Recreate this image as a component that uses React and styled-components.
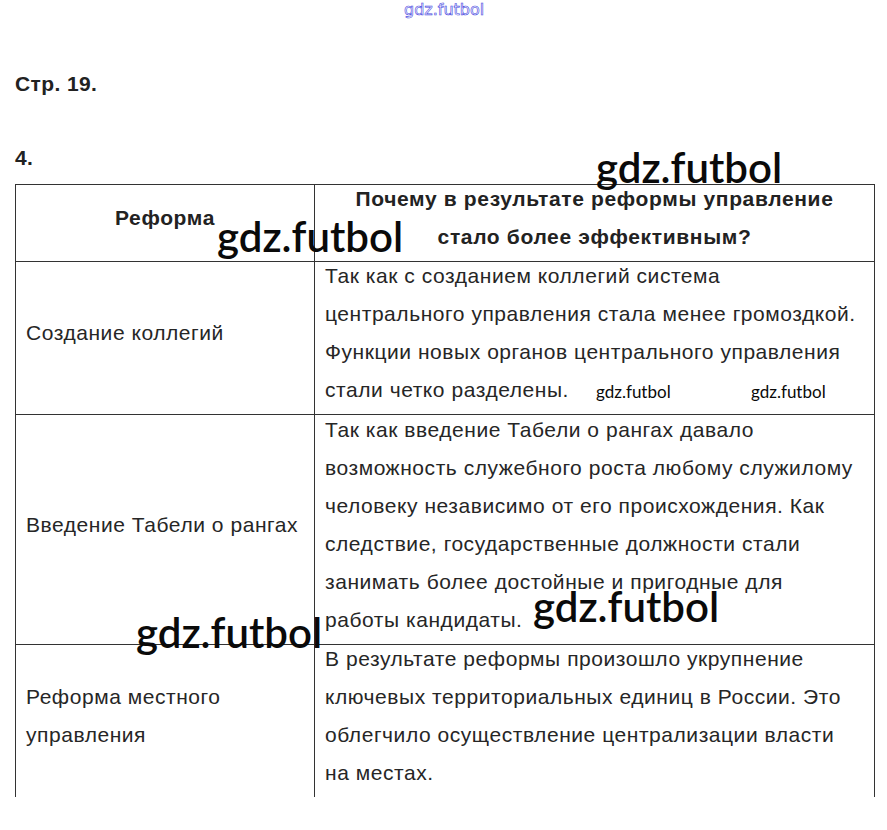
import styled, { createGlobalStyle } from "styled-components";

const Global = createGlobalStyle`
  body {
    margin: 0;
    background: #fff;
    font-family: "Liberation Sans", Arial, sans-serif;
  }
`;

const Page = styled.div`
  position: relative;
  width: 887px;
  min-height: 830px;
  padding: 72px 0 0 15px;
  box-sizing: border-box;
  overflow: hidden;
`;

const Heading = styled.p`
  margin: 0;
  font-size: 21px;
  line-height: 24px;
  font-weight: bold;
  letter-spacing: 0.4px;
  color: #222;
`;

const TaskNum = styled(Heading)`
  margin-top: 50px;
`;

const Table = styled.table`
  margin-top: 14px;
  width: 859px;
  border-collapse: collapse;
  table-layout: fixed;
  color: #262626;
`;

const Row = styled.tr`
  height: ${(p) => p.$h}px;
`;

const Cell = styled.td`
  border: 1px solid #333;
  padding: 0 10px;
  vertical-align: middle;
  font-size: 21px;
  line-height: 38px;
  letter-spacing: 0.55px;
  white-space: nowrap;
  border-bottom: ${(p) => (p.$last ? "none" : "1px solid #333")};
`;

const HeadCell = styled(Cell).attrs({ as: "th" })`
  font-weight: bold;
  text-align: center;
  letter-spacing: 0.65px;
  color: #222;
`;

const Text = styled.div`
  margin: -5px 0 5px;
`;

const Mark = styled.span`
  position: absolute;
  left: ${(p) => p.$x}px;
  top: ${(p) => p.$y}px;
  font-family: Lato, "Open Sans", sans-serif;
  font-size: ${(p) => p.$size || 42}px;
  font-weight: ${(p) => (p.$size ? 400 : 600)};
  line-height: 1;
  color: #0a0a0a;
  white-space: nowrap;
  pointer-events: none;
`;

const TopMark = styled.span`
  position: absolute;
  left: 404px;
  top: 2px;
  font-family: "DejaVu Sans", sans-serif;
  font-size: 16px;
  line-height: 1;
  color: #fff;
  -webkit-text-stroke: 0.6px #4343e0;
`;

const rows = [
  {
    h: 151,
    reform: "Создание коллегий",
    why: [
      "Так как с созданием коллегий система",
      "центрального управления стала менее громоздкой.",
      "Функции новых органов центрального управления",
      "стали четко разделены.",
    ],
  },
  {
    h: 230,
    reform: "Введение Табели о рангах",
    why: [
      "Так как введение Табели о рангах давало",
      "возможность служебного роста любому служилому",
      "человеку независимо от его происхождения. Как",
      "следствие, государственные должности стали",
      "занимать более достойные и пригодные для",
      "работы кандидаты.",
    ],
  },
  {
    h: 151,
    reform: ["Реформа местного", "управления"],
    why: [
      "В результате реформы произошло укрупнение",
      "ключевых территориальных единиц в России. Это",
      "облегчило осуществление централизации власти",
      "на местах.",
    ],
  },
];

function Lines({ items }) {
  const list = Array.isArray(items) ? items : [items];
  return (
    <Text>
      {list.map((t, i) => (
        <div key={i}>{t}</div>
      ))}
    </Text>
  );
}

export default function App() {
  return (
    <Page>
      <Global />
      <TopMark>gdz.futbol</TopMark>
      <Heading>Стр. 19.</Heading>
      <TaskNum>4.</TaskNum>
      <Table>
        <colgroup>
          <col style={{ width: 299 }} />
          <col style={{ width: 560 }} />
        </colgroup>
        <tbody>
          <Row $h={77}>
            <HeadCell>
              <Text>Реформа</Text>
            </HeadCell>
            <HeadCell>
              <Lines items={["Почему в результате реформы управление", "стало более эффективным?"]} />
            </HeadCell>
          </Row>
          {rows.map((r, i) => (
            <Row key={i} $h={r.h}>
              <Cell $last={i === rows.length - 1}>
                <Lines items={r.reform} />
              </Cell>
              <Cell $last={i === rows.length - 1}>
                <Lines items={r.why} />
              </Cell>
            </Row>
          ))}
        </tbody>
      </Table>

      <Mark $x={596} $y={146}>gdz.futbol</Mark>
      <Mark $x={217} $y={215}>gdz.futbol</Mark>
      <Mark $x={596} $y={383} $size={17}>gdz.futbol</Mark>
      <Mark $x={751} $y={383} $size={17}>gdz.futbol</Mark>
      <Mark $x={533} $y={585}>gdz.futbol</Mark>
      <Mark $x={136} $y={611}>gdz.futbol</Mark>
    </Page>
  );
}
